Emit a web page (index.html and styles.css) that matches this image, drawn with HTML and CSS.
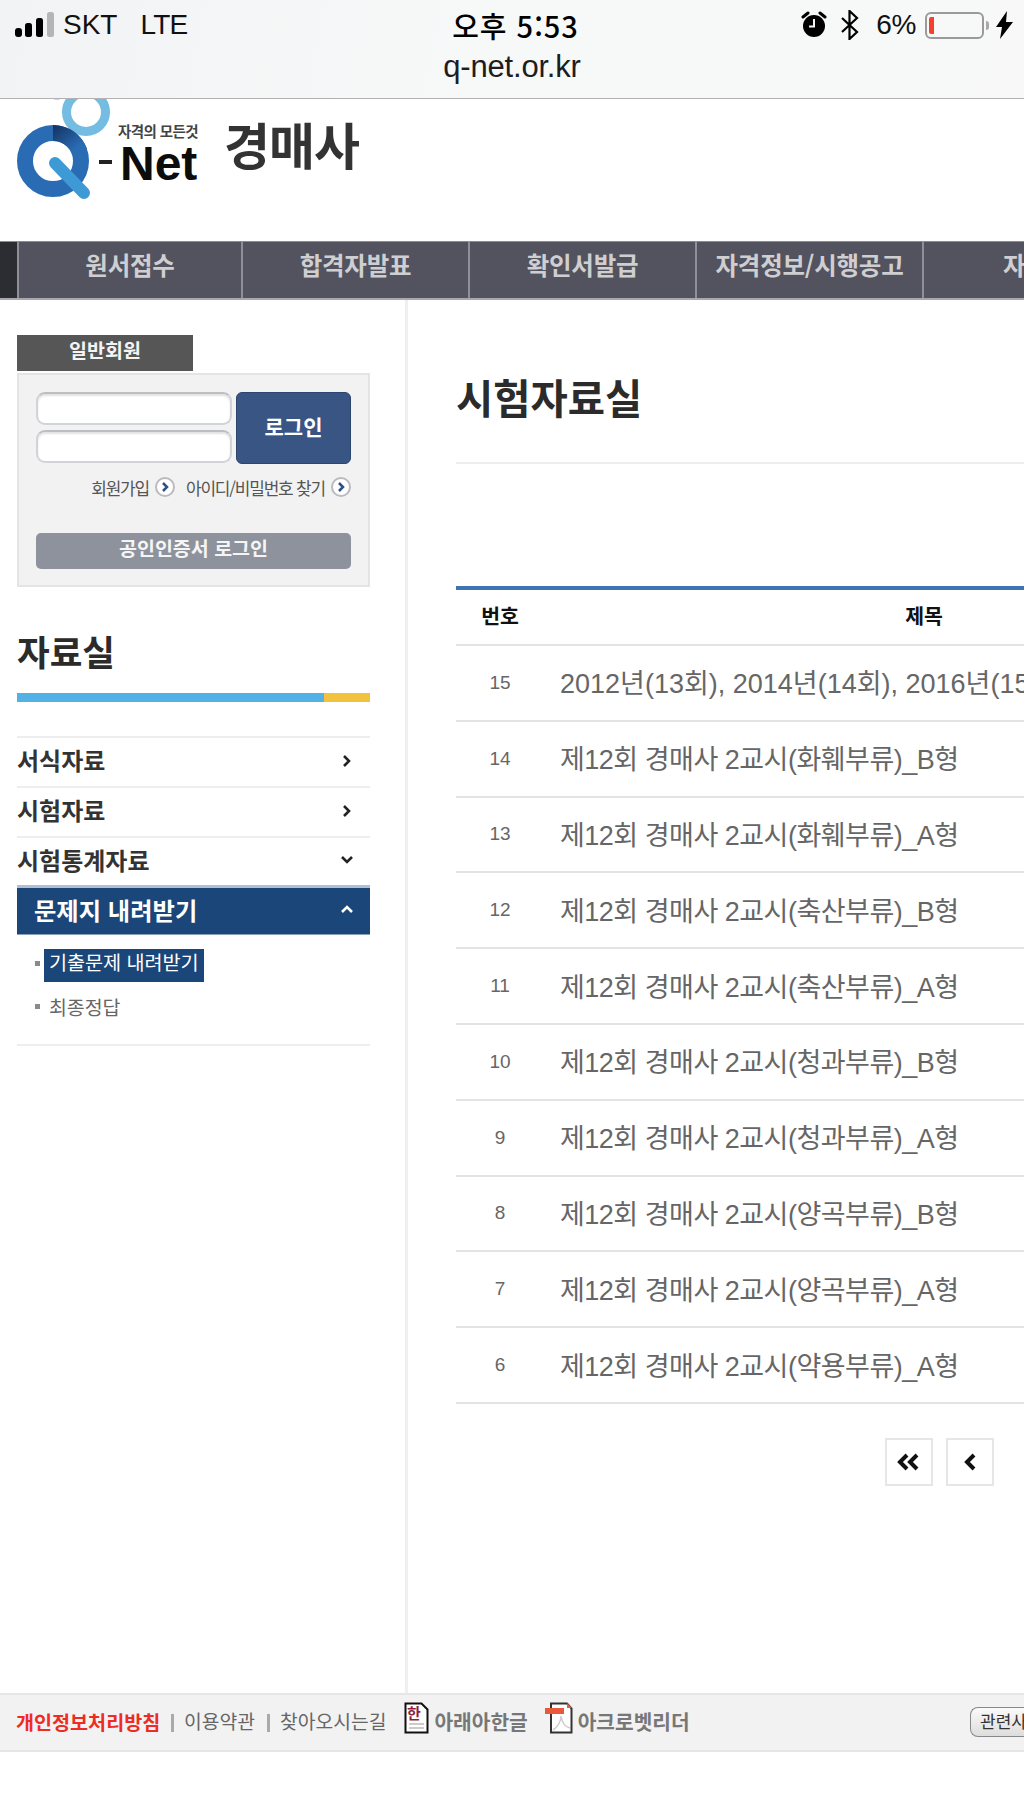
FILE: index.html
```html
<!DOCTYPE html>
<html lang="ko">
<head>
<meta charset="utf-8">
<title>시험자료실</title>
<link rel="stylesheet" href="styles.css">
</head>
<body>
<div class="page">
  <div class="status">
    <div class="status-row">
      <div class="st-left">
        <svg class="signal" width="40" height="26" viewBox="0 0 40 26"><rect x="0" y="16" width="7" height="9" rx="3" fill="#000"/><rect x="10" y="11" width="7" height="14" rx="2.5" fill="#000"/><rect x="21" y="6" width="7" height="19" rx="2.5" fill="#000"/><rect x="32" y="0" width="7" height="25" rx="2.5" fill="#b4b5b6"/></svg>
        <span class="st-text">SKT</span><span class="st-text st-lte">LTE</span>
      </div>
      <div class="st-time">오후 5:53</div>
      <div class="st-right">
        <svg width="26" height="28" viewBox="0 0 26 28"><circle cx="13" cy="15" r="11" fill="#000"/><path d="M13 8v7.500h-5" fill="none" stroke="#f6f6f6" stroke-width="2"/><path d="M2 6l5-4M24 6l-5-4" stroke="#000" stroke-width="3" stroke-linecap="round"/></svg>
        <svg class="bt" width="20" height="30" viewBox="0 0 20 30"><path d="M2 8l15 14-7.500 7V1L17 8 2 22" fill="none" stroke="#000" stroke-width="2.200"/></svg>
        <span class="st-text st-pct">6%</span>
        <span class="battery"><span class="battery-fill"></span></span>
        <span class="battery-nub"></span>
        <svg class="bolt" width="17" height="28" viewBox="0 0 17 28"><path d="M11 0L0 16h6L4 28 17 11h-7z" fill="#000"/></svg>
      </div>
    </div>
    <div class="st-url">q-net.or.kr</div>
  </div>

  <header class="brand">
    <svg class="logo" width="210" height="110" viewBox="0 0 210 110">
      <defs>
        <linearGradient id="dk" x1="0" y1="0" x2="1" y2="1"><stop offset="0" stop-color="#12315f"/><stop offset="0.75" stop-color="#2a6cb4"/></linearGradient>
      </defs>
      <circle cx="86" cy="13" r="19.500" fill="none" stroke="#74bce2" stroke-width="9"/>
      <circle cx="57" cy="-11" r="9" fill="none" stroke="#74bce2" stroke-width="5"/>
      <circle cx="53" cy="62" r="28" fill="none" stroke="#2a6cb4" stroke-width="16"/>
      <path d="M53 26a36 36 0 0 1 34 24l-15 5a20 20 0 0 0-19-13z" fill="url(#dk)"/>
      <path d="M55 64l29 30" stroke="#3d9ad5" stroke-width="12" stroke-linecap="round"/>
      <rect x="99" y="61" width="13" height="4" fill="#222"/>
      <text x="118" y="38" class="logo-small">자격의 모든것</text>
      <text x="120" y="81" class="logo-net">Net</text>
    </svg>
    <h1 class="brand-title">경매사</h1>
  </header>

  <nav class="nav">
    <div class="nav-edge"></div>
    <a class="nav-item nav-first">원서접수</a>
    <a class="nav-item">합격자발표</a>
    <a class="nav-item">확인서발급</a>
    <a class="nav-item">자격정보/시행공고</a>
    <a class="nav-item">자료실</a>
  </nav>

  <div class="layout">
    <aside class="side">
      <div class="login-tab">일반회원</div>
      <div class="login-box">
        <div class="login-top">
          <div class="login-inputs">
            <div class="field"></div>
            <div class="field"></div>
          </div>
          <div class="login-btn">로그인</div>
        </div>
        <div class="login-links">
          <span>회원가입</span>
          <svg class="go" width="20" height="20" viewBox="0 0 20 20"><circle cx="10" cy="10" r="9" fill="#fff" stroke="#b9bbbf" stroke-width="2"/><path d="M8 6l4 4-4 4" fill="none" stroke="#2b4f8c" stroke-width="2.500"/></svg>
          <span class="link-second">아이디/비밀번호 찾기</span>
          <svg class="go" width="20" height="20" viewBox="0 0 20 20"><circle cx="10" cy="10" r="9" fill="#fff" stroke="#b9bbbf" stroke-width="2"/><path d="M8 6l4 4-4 4" fill="none" stroke="#2b4f8c" stroke-width="2.500"/></svg>
        </div>
        <div class="cert-btn">공인인증서 로그인</div>
      </div>

      <h2 class="side-title">자료실</h2>
      <div class="side-bar"><span class="side-bar-blue"></span><span class="side-bar-yellow"></span></div>

      <ul class="menu">
        <li class="menu-item"><span>서식자료</span><svg width="12" height="14" viewBox="0 0 12 14"><path d="M3 2l5 5-5 5" fill="none" stroke="#222" stroke-width="2.600"/></svg></li>
        <li class="menu-item"><span>시험자료</span><svg width="12" height="14" viewBox="0 0 12 14"><path d="M3 2l5 5-5 5" fill="none" stroke="#222" stroke-width="2.600"/></svg></li>
        <li class="menu-item menu-open"><span>시험통계자료</span><svg class="chev-wide" width="14" height="12" viewBox="0 0 14 12"><path d="M2 3l5 5 5-5" fill="none" stroke="#222" stroke-width="2.600"/></svg></li>
        <li class="menu-active"><span>문제지 내려받기</span><svg class="chev-wide" width="14" height="12" viewBox="0 0 14 12"><path d="M2 8l5-5 5 5" fill="none" stroke="#fff" stroke-width="2.600"/></svg></li>
      </ul>
      <ul class="submenu">
        <li class="sub-item"><span class="sub-dot sub-dot-up"></span><span class="sub-current">기출문제 내려받기</span></li>
        <li class="sub-item"><span class="sub-dot"></span><span class="sub-text">최종정답</span></li>
      </ul>
    </aside>

    <main class="content">
      <h2 class="content-title">시험자료실</h2>
      <table class="board">
        <colgroup><col class="col-no"><col class="col-title"></colgroup>
        <thead><tr><th>번호</th><th>제목</th></tr></thead>
        <tbody>
          <tr><td class="no">15</td><td class="ttl ttl-wide">2012년(13회), 2014년(14회), 2016년(15회) 경매사 2교시 기출문제</td></tr>
          <tr><td class="no">14</td><td class="ttl">제12회 경매사 2교시(화훼부류)_B형</td></tr>
          <tr><td class="no">13</td><td class="ttl">제12회 경매사 2교시(화훼부류)_A형</td></tr>
          <tr><td class="no">12</td><td class="ttl">제12회 경매사 2교시(축산부류)_B형</td></tr>
          <tr><td class="no">11</td><td class="ttl">제12회 경매사 2교시(축산부류)_A형</td></tr>
          <tr><td class="no">10</td><td class="ttl">제12회 경매사 2교시(청과부류)_B형</td></tr>
          <tr><td class="no">9</td><td class="ttl">제12회 경매사 2교시(청과부류)_A형</td></tr>
          <tr><td class="no">8</td><td class="ttl">제12회 경매사 2교시(양곡부류)_B형</td></tr>
          <tr><td class="no">7</td><td class="ttl">제12회 경매사 2교시(양곡부류)_A형</td></tr>
          <tr><td class="no">6</td><td class="ttl">제12회 경매사 2교시(약용부류)_A형</td></tr>
        </tbody>
      </table>
      <div class="pager">
        <a class="pg"><svg width="24" height="18" viewBox="0 0 24 18"><path d="M10 2L3 9l7 7M20 2l-7 7 7 7" fill="none" stroke="#111" stroke-width="4"/></svg></a>
        <a class="pg"><svg width="14" height="18" viewBox="0 0 14 18"><path d="M11 2L4 9l7 7" fill="none" stroke="#111" stroke-width="4"/></svg></a>
      </div>
    </main>
  </div>

  <footer class="foot">
    <a class="foot-red">개인정보처리방침</a>
    <span class="foot-sep"></span>
    <a class="foot-link">이용약관</a>
    <span class="foot-sep"></span>
    <a class="foot-link">찾아오시는길</a>
    <svg class="doc doc-hwp" width="25" height="32" viewBox="0 0 25 32"><path d="M1.500 1.500h16l6 6v23h-22z" fill="#fff" stroke="#111" stroke-width="2"/><text x="3" y="17" class="doc-han">한</text><path d="M5 22h15M5 26h15" stroke="#bbb" stroke-width="1.500"/></svg>
    <a class="foot-dl">아래아한글</a>
    <svg class="doc doc-pdf" width="28" height="32" viewBox="0 0 28 32"><path d="M6 1.500h16l4.500 5v24h-20.500z" fill="#fff" stroke="#333" stroke-width="2"/><rect x="0" y="6" width="19" height="6" fill="#e8583a"/><path d="M22 1l5 5h-5z" fill="#e8583a"/><path d="M8 28c5-3 8-9 8-14 1 6 4 11 9 12" fill="none" stroke="#ccc" stroke-width="1.500"/></svg>
    <a class="foot-dl">아크로벳리더</a>
    <span class="foot-btn">관련사이트</span>
  </footer>
</div>
</body>
</html>
```

FILE: styles.css
```css
* { box-sizing: border-box; }
html, body { margin: 0; padding: 0; background: #fff; }
body { font-family: "Liberation Sans", "Noto Sans CJK KR", sans-serif; }
ul { list-style: none; margin: 0; padding: 0; }
h1, h2 { margin: 0; }
.page { width: 1024px; height: 1820px; overflow: hidden; }

/* status bar */
.status { height: 99px; background: linear-gradient(100deg, #f2f3f5 0%, #f7f8f8 45%, #f8f8f8 100%); border-bottom: 1px solid #b2b2b2; }
.status-row { display: grid; grid-template-columns: 1fr auto 1fr; align-items: center; height: 50px; }
.st-left { display: flex; align-items: center; padding-left: 15px; }
.signal { margin-right: 8px; }
.st-text { font-family: "Liberation Sans", sans-serif; font-size: 28px; color: #111; }
.st-lte { margin-left: 23px; letter-spacing: -0.8px; }
.st-time { font-family: "Noto Sans CJK KR", sans-serif; font-size: 29px; font-weight: 500; color: #000; line-height: 50px; letter-spacing: 1px; padding-left: 7px; }
.st-right { display: flex; align-items: center; justify-content: flex-end; padding-right: 11px; }
.bt { margin-left: 13px; }
.st-pct { margin-left: 16px; letter-spacing: -0.4px; }
.battery { width: 59px; height: 27px; border: 2.500px solid #9a9a9a; border-radius: 6px; margin-left: 9px; padding: 3px 2px; display: block; }
.battery-fill { display: block; width: 5px; height: 100%; background: #f4402e; border-radius: 2px 0 0 2px; }
.battery-nub { width: 3px; height: 9px; background: #a8a8a8; margin-left: 2px; margin-right: 7px; border-radius: 0 3px 3px 0; }
.st-url { text-align: center; font-size: 31px; letter-spacing: -0.2px; color: #1d1d1d; line-height: 30px; margin-top: 2px; font-family: "Liberation Sans", sans-serif; }

/* brand */
.brand { height: 142px; display: flex; align-items: flex-start; background: #fff; }
.logo { display: block; flex: none; }
.logo-small { font-family: "Noto Sans CJK KR", sans-serif; font-size: 14.500px; font-weight: 700; fill: #444; letter-spacing: -0.6px; }
.logo-net { font-family: "Liberation Sans", sans-serif; font-size: 48px; font-weight: 700; fill: #0c0c0c; }
.brand-title { font-family: "Noto Sans CJK KR", sans-serif; font-size: 50px; font-weight: 700; color: #333; line-height: 60px; margin: 14px 0 0 14px; letter-spacing: -1px; }

/* nav */
.nav { height: 59px; display: flex; background: #52535e; border-top: 1px solid #8b8c92; border-bottom: 2px solid #a9a9ad; }
.nav-edge { width: 17px; background: #2c2d33; flex: none; }
.nav-item { flex: none; width: 227px; border-left: 2px solid #8f9097; color: #cfcfd2; font-family: "Noto Sans CJK KR", sans-serif; font-size: 24.500px; font-weight: 700; text-align: center; line-height: 46px; white-space: nowrap; letter-spacing: -0.2px; }
.nav-first { width: 224px; }

/* layout */
.layout { height: 1393px; display: flex; }
.side { width: 408px; flex: none; padding: 35px 35px 0 17px; border-right: 3px solid #efefef; font-family: "Noto Sans CJK KR", sans-serif; }

.login-tab { width: 176px; height: 36px; background: #565656; color: #f4f4f4; font-size: 19.500px; font-weight: 700; text-align: center; line-height: 29px; }
.login-box { margin-top: 2px; height: 214px; background: #f2f2f2; border: 2px solid #e4e4e4; padding: 17px 17px 0; }
.login-top { display: flex; gap: 4px; }
.login-inputs { width: 196px; flex: none; display: flex; flex-direction: column; gap: 5px; }
.field { height: 33px; background: #fff; border: 2px solid #d0d3d8; border-top-color: #bcbec2; border-radius: 9px; box-shadow: inset 0 2px 2px #e2e2e2; }
.login-btn { width: 115px; height: 72px; background: #385583; border: 1px solid #2c4670; border-radius: 6px; color: #fff; font-size: 21px; font-weight: 700; text-align: center; line-height: 66px; }
.login-links { display: flex; align-items: center; justify-content: flex-end; height: 20px; margin-top: 13px; font-size: 17px; color: #555; letter-spacing: -1.200px; white-space: nowrap; }
.go { margin-left: 6px; flex: none; }
.link-second { margin-left: 11px; }
.cert-btn { margin-top: 36px; height: 36px; background: #8d929c; border-radius: 5px; color: #f5f5f5; font-size: 19.500px; font-weight: 700; text-align: center; line-height: 29px; }

.side-title { font-size: 35.500px; font-weight: 700; color: #2b2b2b; line-height: 48px; margin-top: 40px; }
.side-bar { display: flex; height: 9px; margin-top: 18px; }
.side-bar-blue { width: 307px; background: #54b1e6; }
.side-bar-yellow { flex: 1; background: #f2c13e; }

.menu { margin-top: 34px; }
.menu-item { height: 50px; border-top: 2px solid #eeeeee; display: flex; align-items: center; justify-content: space-between; padding: 0 17px 5px 0; font-size: 24px; font-weight: 700; color: #333; }
.menu-item svg { margin-top: 2px; }
.menu-open { height: 49px; }
.menu-active { height: 50px; background: #1b4679; border-top: 3px solid #b0c0d2; border-bottom: 1px solid #8aa0bb; display: flex; align-items: center; justify-content: space-between; padding: 0 17px 3px; color: #fff; font-size: 24.300px; font-weight: 700; white-space: nowrap; }
.chev-wide { margin-right: -1px; }

.submenu { padding: 14px 0 0 18px; border-bottom: 2px solid #eeeeee; height: 111px; }
.sub-item { display: flex; align-items: center; height: 33px; margin-bottom: 8px; }
.sub-dot { width: 5px; height: 5px; background: #8a8a8a; flex: none; }
.sub-dot-up { margin-top: -4px; }
.sub-current { margin-left: 4px; height: 33px; width: 160px; background: #1b4679; color: #fff; font-size: 19.700px; line-height: 26px; padding-left: 5px; white-space: nowrap; letter-spacing: -0.1px; }
.sub-text { margin-left: 9px; font-size: 19.500px; color: #666; letter-spacing: -0.1px; }

/* content */
.content { flex: 1; min-width: 0; padding-left: 48px; overflow: hidden; }
.content-title { font-family: "Noto Sans CJK KR", sans-serif; font-size: 40.500px; font-weight: 700; color: #2b2b2b; line-height: 52px; padding-top: 71px; height: 164px; border-bottom: 2px solid #eeeeee; }
.board { margin-top: 122px; width: 848px; table-layout: fixed; border-collapse: collapse; border-top: 4px solid #3f74b4; }
.col-no { width: 88px; }
.col-title { width: 760px; }
.board th { height: 57px; font-family: "Noto Sans CJK KR", sans-serif; font-size: 20.500px; font-weight: 700; color: #111; text-align: center; border-bottom: 2px solid #e3e3e3; padding: 0 0 4px; }
.board td { height: 75.800px; border-bottom: 2px solid #e3e3e3; padding: 0; }
.no { text-align: center; font-size: 19px; color: #666; }
.board .ttl { font-size: 27px; color: #666; padding: 0 0 2px 16px; white-space: nowrap; overflow: hidden; letter-spacing: -0.5px; }
.board .ttl-wide { letter-spacing: 0; }
.pager { display: flex; justify-content: flex-end; gap: 13px; margin-top: 34px; padding-right: 30px; }
.pg { width: 48px; height: 48px; border: 2px solid #e6e6e6; display: flex; align-items: center; justify-content: center; background: #fff; }

/* footer */
.foot { height: 59px; background: #f2f2f2; border-top: 2px solid #e6e6e6; border-bottom: 2px solid #e6e6e6; display: flex; align-items: center; padding: 0 0 3px 16px; font-family: "Noto Sans CJK KR", sans-serif; white-space: nowrap; }
.foot-red { font-size: 19.600px; font-weight: 700; color: #ee2c23; width: 143px; }
.foot-sep { width: 3px; height: 18px; background: #aaa; margin: 4px 10px 0 12px; flex: none; }
.foot-link { font-size: 19.300px; color: #666; }
.foot-link + .doc { margin-left: 18px; }
.doc { flex: none; margin-top: -6px; }
.doc-han { font-family: "Noto Sans CJK KR", sans-serif; font-size: 15px; font-weight: 700; fill: #8c1f3f; }
.doc-pdf { margin-left: 17px; margin-right: 5px; }
.doc-hwp { margin-right: 5px; }
.foot-dl { font-size: 20.300px; font-weight: 700; color: #777; }
.foot-btn { margin-left: auto; flex: none; width: 54px; height: 30px; margin-top: 1px; border: 1px solid #888; border-right: 0; border-radius: 8px 0 0 8px; background: linear-gradient(#fafafa, #ddd); font-size: 17px; line-height: 26px; color: #333; padding-left: 9px; overflow: hidden; }
```
